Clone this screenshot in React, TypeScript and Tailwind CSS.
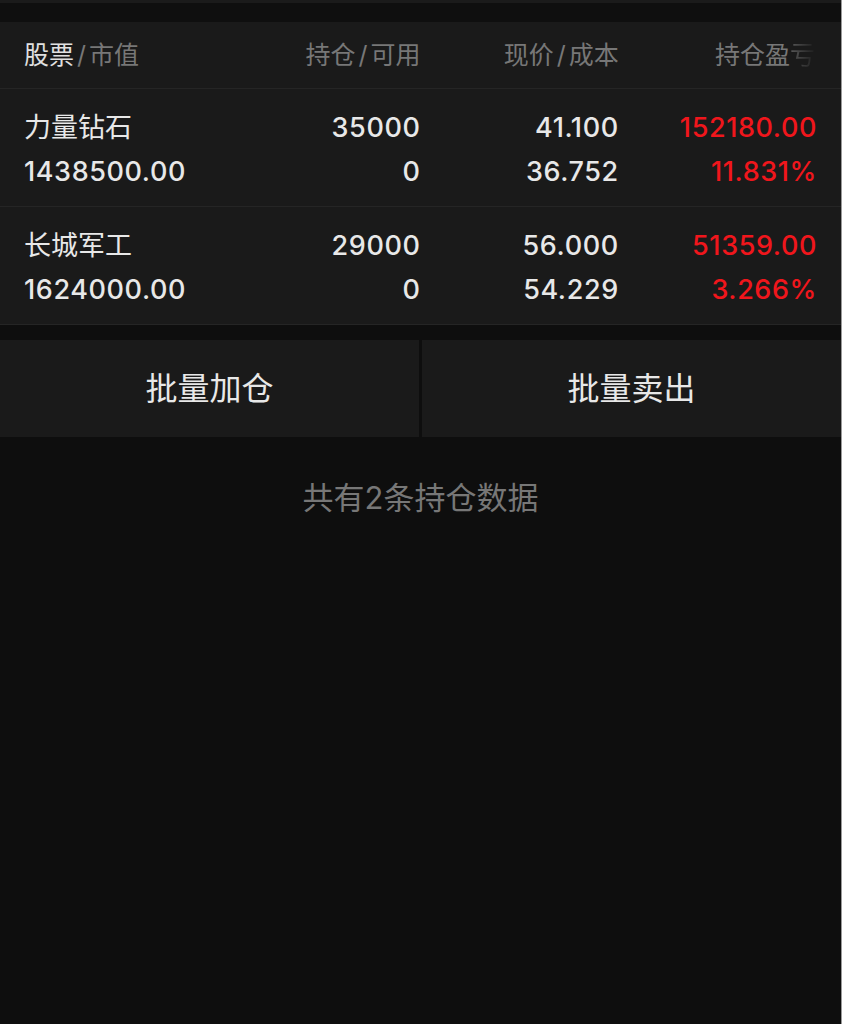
import React from "react";

const FONT = { fontFamily: 'Inter, "Noto Sans CJK SC", sans-serif' };

type Row = {
  name: string;
  value: string;
  hold: string;
  avail: string;
  price: string;
  cost: string;
  pl: string;
  pct: string;
};

const rows: Row[] = [
  { name: "力量钻石", value: "1438500.00", hold: "35000", avail: "0", price: "41.100", cost: "36.752", pl: "152180.00", pct: "11.831%" },
  { name: "长城军工", value: "1624000.00", hold: "29000", avail: "0", price: "56.000", cost: "54.229", pl: "51359.00", pct: "3.266%" },
];

function Slash() {
  return <span className="mx-[3px]">/</span>;
}

export default function App() {
  return (
    <div className="flex w-[842px] h-[1024px] bg-[#0e0e0e] overflow-hidden" style={FONT}>
      <div className="flex flex-col w-[841px]">
        <div className="h-[3px] bg-[#1b1b1b]" />
        <div className="h-[19px] bg-[#0f0f0f]" />
        {/* header */}
        <div className="grid grid-cols-4 items-center h-[67px] px-6 bg-[#1a1a1a] border-b border-[#252525] text-[25px] leading-none text-[#777777]">
          <div className="text-left">
            <span className="text-[#e0e0e0]">股票</span>
            <Slash />
            <span>市值</span>
          </div>
          <div className="text-right">
            持仓<Slash />可用
          </div>
          <div className="text-right">
            现价<Slash />成本
          </div>
          <div className="text-right pr-[2px]">
            持仓盈
            <span className="bg-gradient-to-r from-[#5a5a5a] to-[#1e1e1e] bg-clip-text text-transparent">亏</span>
          </div>
        </div>
        {rows.map((r) => (
          <div
            key={r.name}
            className="grid grid-cols-4 h-[118px] px-6 pt-[17px] bg-[#1a1a1a] border-b border-[#252525] text-[27px] leading-[44px] text-[#e8e8e8]"
          >
            <div className="flex flex-col text-left">
              <span>{r.name}</span>
              <span className="font-medium tracking-[0.6px]">{r.value}</span>
            </div>
            <div className="flex flex-col text-right font-medium tracking-[0.6px]">
              <span>{r.hold}</span>
              <span>{r.avail}</span>
            </div>
            <div className="flex flex-col text-right font-medium tracking-[0.6px]">
              <span>{r.price}</span>
              <span>{r.cost}</span>
            </div>
            <div className="flex flex-col text-right font-medium tracking-[0.6px] text-[#f0161c]">
              <span>{r.pl}</span>
              <span>{r.pct}</span>
            </div>
          </div>
        ))}
        {/* buttons */}
        <div className="flex gap-[3px] mt-[15px] h-[97px]">
          <div className="flex-1 flex items-center justify-center bg-[#1a1a1a] text-[32px] text-[#e8e8e8]">批量加仓</div>
          <div className="flex-1 flex items-center justify-center bg-[#1a1a1a] text-[32px] text-[#e8e8e8]">批量卖出</div>
        </div>
        <div className="mt-[41px] text-center text-[31px] leading-[40px] text-[#777777]">共有2条持仓数据</div>
      </div>
      <div className="w-px bg-[#9a9a9a]" />
    </div>
  );
}
